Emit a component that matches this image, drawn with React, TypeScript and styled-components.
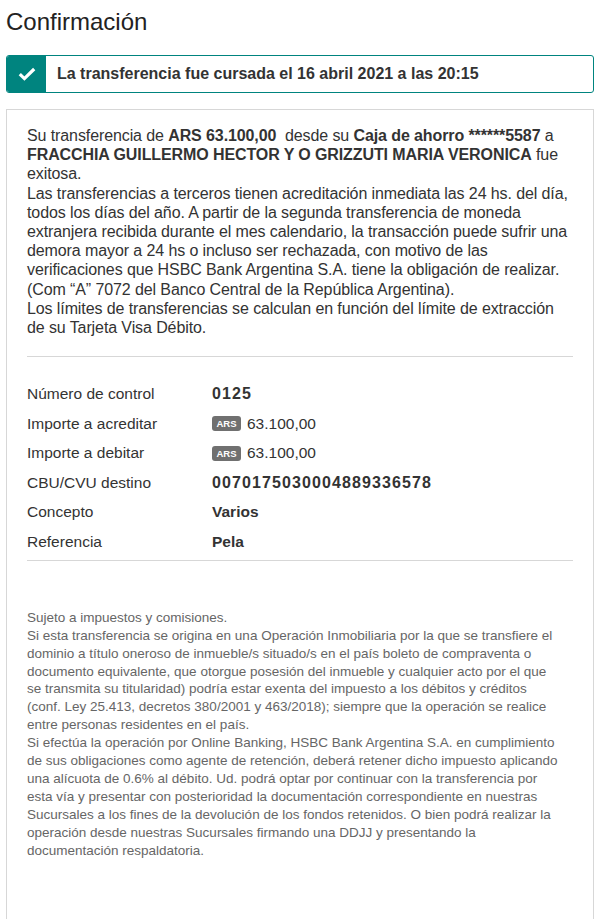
import React from "react";
import styled, { createGlobalStyle } from "styled-components";

const Global = createGlobalStyle`
  html, body { margin: 0; padding: 0; background: #fff; }
  body { font-family: "Liberation Sans", Arial, sans-serif; color: #333; }
`;

const Page = styled.div`
  width: 588px;
  padding: 0 0 0 6px;
  box-sizing: content-box;
`;

const Title = styled.h1`
  margin: 0;
  padding-top: 7px;
  height: 48px;
  box-sizing: border-box;
  font-size: 24px;
  font-weight: 400;
  color: #222;
  line-height: 29px;
`;

const Alert = styled.div`
  display: flex;
  align-items: stretch;
  height: 38px;
  border: 1px solid #00847f;
  border-radius: 3px;
  box-sizing: border-box;
  margin-top: 7px;
  overflow: hidden;
`;

const AlertIcon = styled.div`
  width: 39px;
  background: #00847f;
  display: flex;
  align-items: center;
  justify-content: center;
`;

const AlertText = styled.div`
  display: flex;
  align-items: center;
  padding-left: 11px;
  font-size: 16px;
  font-weight: 700;
  color: #333;
`;

const Card = styled.div`
  margin-top: 16px;
  border: 1px solid #d7d7d7;
  border-bottom: none;
  padding: 16px 20px 60px 20px;
  min-height: 820px;
  box-sizing: border-box;
`;

const Lead = styled.p`
  margin: 0;
  font-size: 16px;
  line-height: 19.2px;
  letter-spacing: -0.1px;
  color: #333;
  b { font-weight: 700; }
`;

const Divider = styled.hr<{ $top: number; $bottom: number }>`
  border: none;
  border-top: 1px solid #d7d7d7;
  margin: ${(p) => `${p.$top}px 0 ${p.$bottom}px`};
`;

const Rows = styled.div`
  display: grid;
  grid-template-columns: 185px 1fr;
  grid-auto-rows: 29.6px;
  align-items: center;
  font-size: 15.5px;
`;

const Label = styled.div`
  color: #333;
`;

const Value = styled.div<{ $bold?: boolean; $digits?: boolean }>`
  color: #333;
  font-weight: ${(p) => (p.$bold ? 700 : 400)};
  letter-spacing: ${(p) => (p.$digits ? "1.1px" : "0")};
  font-size: ${(p) => (p.$digits ? "16px" : "inherit")};
  display: flex;
  align-items: center;
`;

const Badge = styled.span`
  display: inline-flex;
  align-items: center;
  justify-content: center;
  background: #707070;
  color: #fff;
  font-size: 9.5px;
  font-weight: 700;
  letter-spacing: 0;
  width: 29px;
  height: 15px;
  border-radius: 3px;
  margin-right: 6px;
`;

const Footer = styled.p`
  margin: 0;
  font-size: 13.5px;
  line-height: 17.9px;
  color: #666;
`;

export default function App() {
  return (
    <Page>
      <Global />
      <Title>Confirmación</Title>
      <Alert>
        <AlertIcon>
          <svg width="18" height="14" viewBox="0 0 18 14">
            <path d="M1.8 7.2 L6.4 11.6 L16.2 2" fill="none" stroke="#fff" strokeWidth="3.2" />
          </svg>
        </AlertIcon>
        <AlertText>La transferencia fue cursada el 16 abril 2021 a las 20:15</AlertText>
      </Alert>
      <Card>
        <Lead>
          Su transferencia de <b>ARS 63.100,00</b>&nbsp; desde su <b>Caja de ahorro ******5587</b> a<br />
          <b>FRACCHIA GUILLERMO HECTOR Y O GRIZZUTI MARIA VERONICA</b> fue
          <br />
          exitosa.
          <br />
          Las transferencias a terceros tienen acreditación inmediata las 24 hs. del día,
          <br />
          todos los días del año. A partir de la segunda transferencia de moneda
          <br />
          extranjera recibida durante el mes calendario, la transacción puede sufrir una
          <br />
          demora mayor a 24 hs o incluso ser rechazada, con motivo de las
          <br />
          verificaciones que HSBC Bank Argentina S.A. tiene la obligación de realizar.
          <br />
          (Com “A” 7072 del Banco Central de la República Argentina).
          <br />
          Los límites de transferencias se calculan en función del límite de extracción
          <br />
          de su Tarjeta Visa Débito.
        </Lead>
        <Divider $top={19} $bottom={22} />
        <Rows>
          <Label>Número de control</Label>
          <Value $bold $digits>0125</Value>
          <Label>Importe a acreditar</Label>
          <Value>
            <Badge>ARS</Badge>63.100,00
          </Value>
          <Label>Importe a debitar</Label>
          <Value>
            <Badge>ARS</Badge>63.100,00
          </Value>
          <Label>CBU/CVU destino</Label>
          <Value $bold $digits>0070175030004889336578</Value>
          <Label>Concepto</Label>
          <Value $bold>Varios</Value>
          <Label>Referencia</Label>
          <Value $bold>Pela</Value>
        </Rows>
        <Divider $top={3} $bottom={48} />
        <Footer>
          Sujeto a impuestos y comisiones.
          <br />
          Si esta transferencia se origina en una Operación Inmobiliaria por la que se transfiere el
          <br />
          dominio a título oneroso de inmueble/s situado/s en el país boleto de compraventa o
          <br />
          documento equivalente, que otorgue posesión del inmueble y cualquier acto por el que
          <br />
          se transmita su titularidad) podría estar exenta del impuesto a los débitos y créditos
          <br />
          (conf. Ley 25.413, decretos 380/2001 y 463/2018); siempre que la operación se realice
          <br />
          entre personas residentes en el país.
          <br />
          Si efectúa la operación por Online Banking, HSBC Bank Argentina S.A. en cumplimiento
          <br />
          de sus obligaciones como agente de retención, deberá retener dicho impuesto aplicando
          <br />
          una alícuota de 0.6% al débito. Ud. podrá optar por continuar con la transferencia por
          <br />
          esta vía y presentar con posterioridad la documentación correspondiente en nuestras
          <br />
          Sucursales a los fines de la devolución de los fondos retenidos. O bien podrá realizar la
          <br />
          operación desde nuestras Sucursales firmando una DDJJ y presentando la
          <br />
          documentación respaldatoria.
        </Footer>
      </Card>
    </Page>
  );
}
